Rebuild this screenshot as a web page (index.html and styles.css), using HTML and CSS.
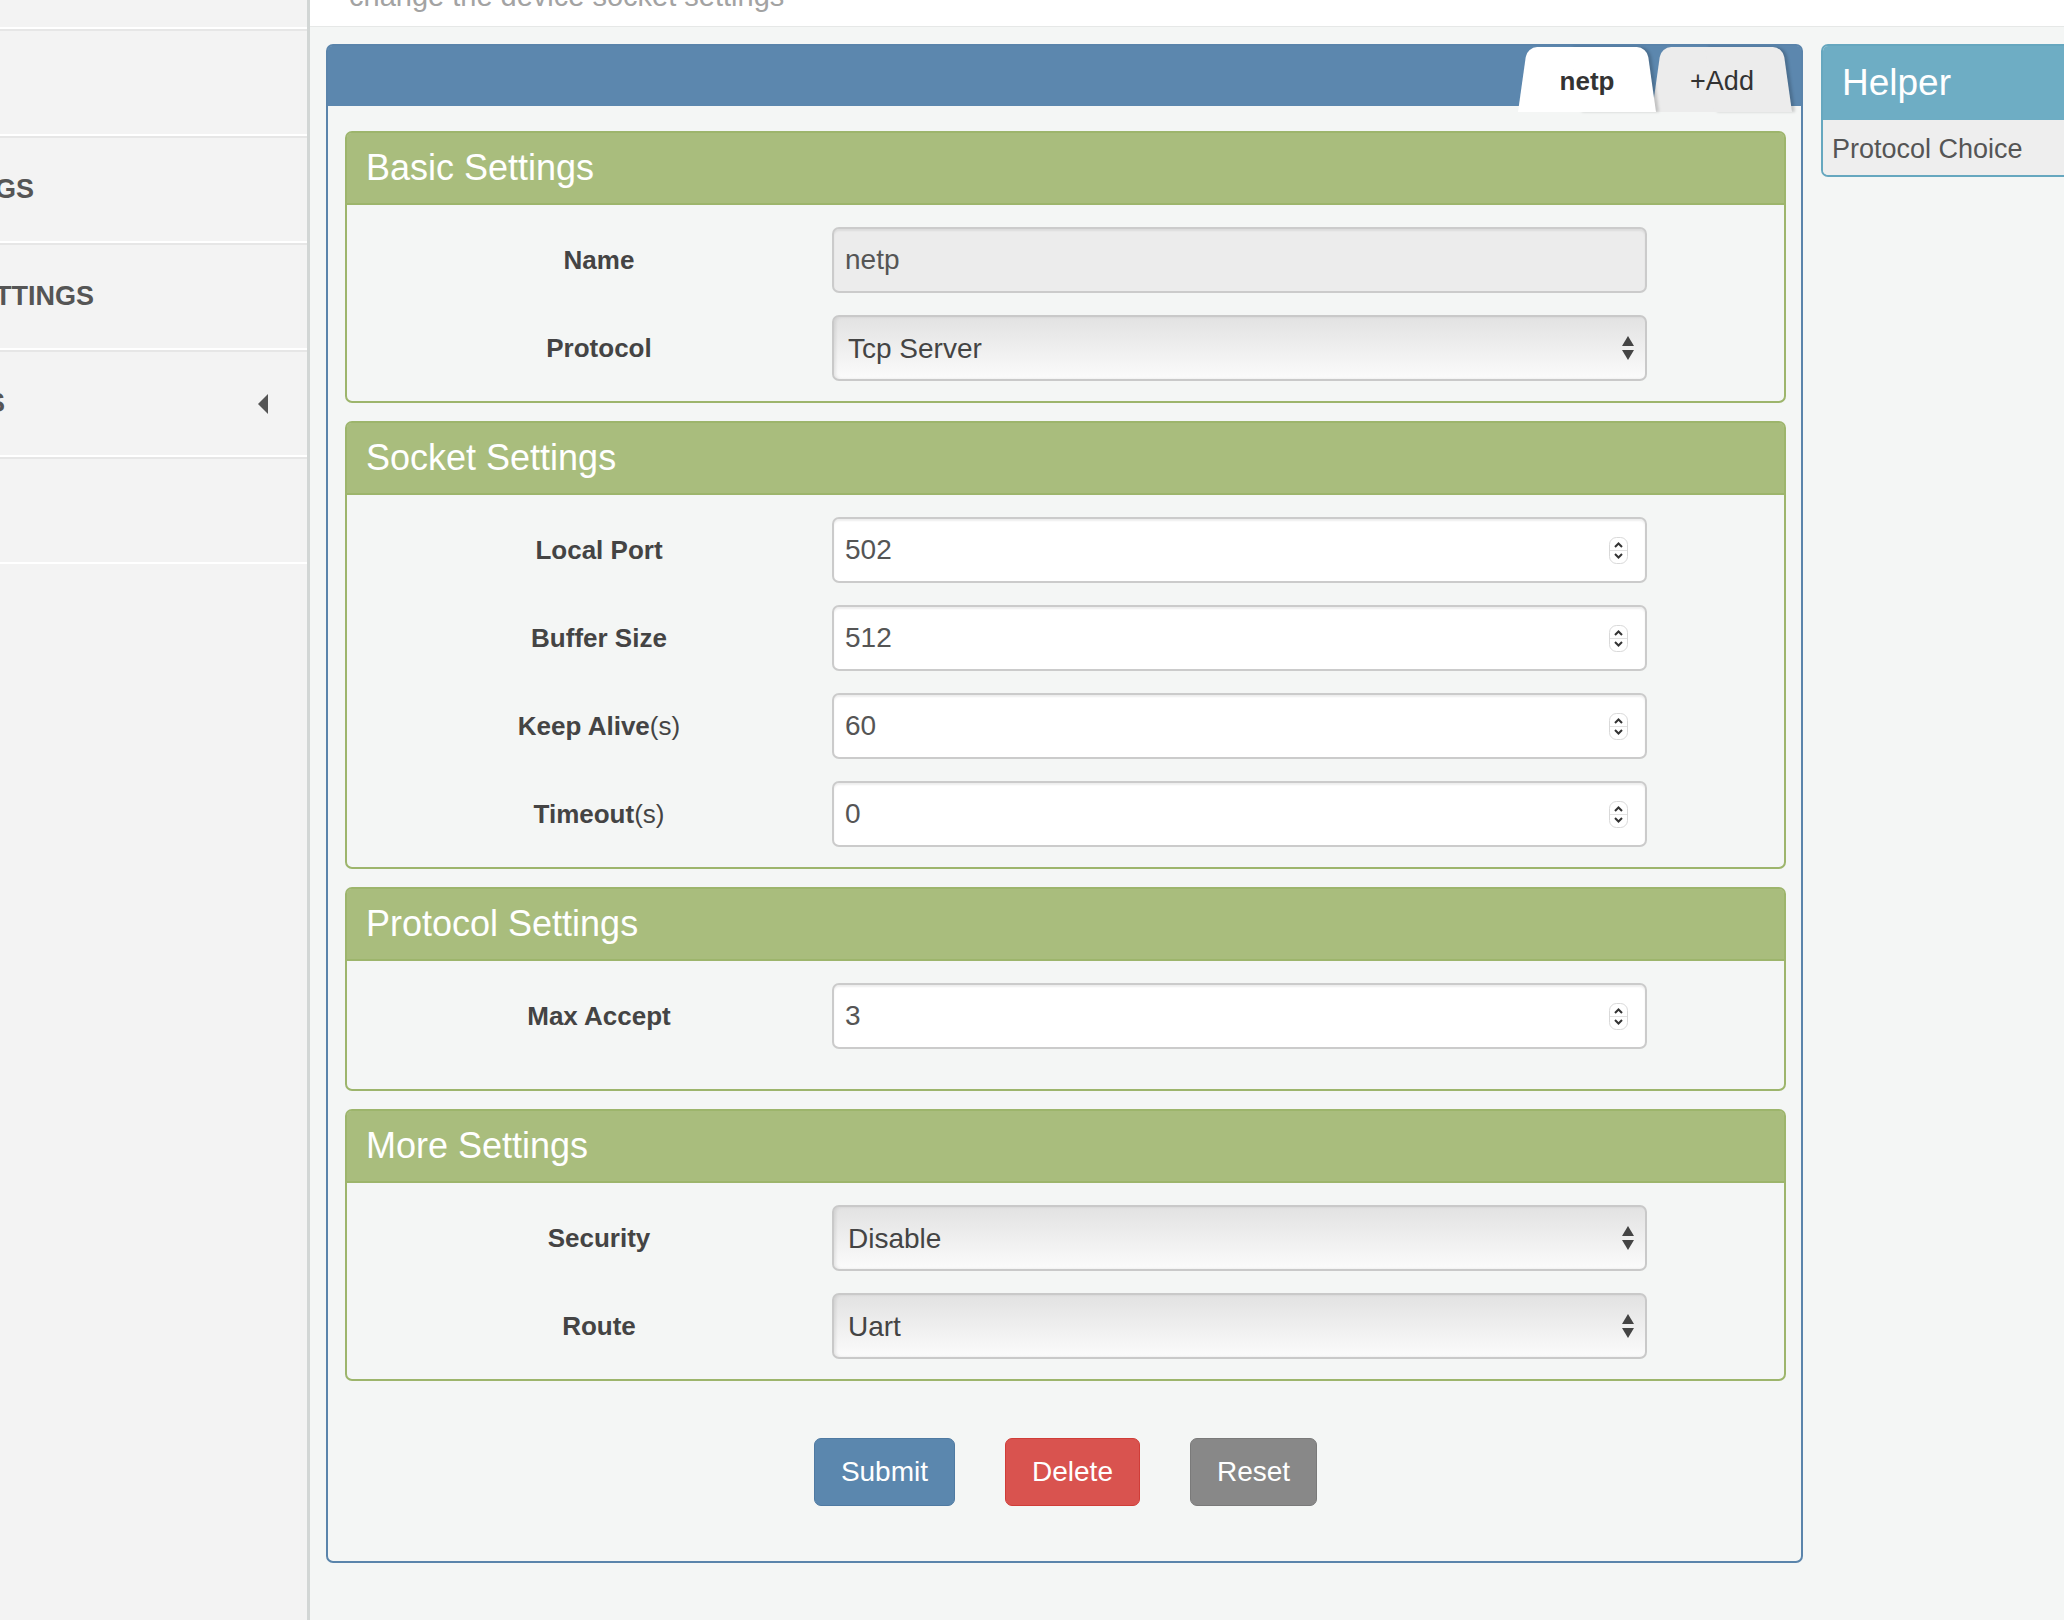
FILE: index.html
```html
<!DOCTYPE html>
<html lang="en">
  <head>
    <meta charset="UTF-8" />
    <meta name="viewport" content="width=device-width, initial-scale=1.0" />
    <title>Socket Settings</title>
    <link rel="stylesheet" href="styles.css">
  </head>
  <body>
    <div class="page">
      <aside class="sidebar">
        <ul class="menu">
          <li class="menu_item"></li>
          <li class="menu_item"></li>
          <li class="menu_item"><span class="menu_text">GS</span></li>
          <li class="menu_item"><span class="menu_text">TTINGS</span></li>
          <li class="menu_item"><span class="menu_text menu_text_s">S</span><i class="caret"></i></li>
          <li class="menu_item"></li>
        </ul>
      </aside>

      <div class="content">
        <div class="top_bar">
          <p class="subtitle">change the device socket settings</p>
        </div>

        <div class="main">
          <div class="panel">
            <div class="panel_head">
              <div class="tab tab_active">netp</div>
              <div class="tab tab_add">+Add</div>
            </div>

            <form class="panel_body">
              <!-- basic -->
              <div class="section">
                <div class="section_head">Basic Settings</div>
                <div class="section_body">
                  <label class="field_label">Name</label>
                  <div class="field field_readonly">
                    <input type="text" value="netp" readonly />
                  </div>
                  <label class="field_label">Protocol</label>
                  <div class="select_box">
                    <select>
                      <option>Tcp Server</option>
                      <option>Tcp Client</option>
                      <option>Udp Server</option>
                      <option>Udp Client</option>
                    </select>
                    <svg class="select_arrows" width="12" height="24" viewBox="0 0 12 24"><polygon points="0,10 6,0 12,10" fill="#444"/><polygon points="0,14 12,14 6,24" fill="#444"/></svg>
                  </div>
                </div>
              </div>

              <!-- socket -->
              <div class="section">
                <div class="section_head">Socket Settings</div>
                <div class="section_body">
                  <label class="field_label">Local Port</label>
                  <div class="field">
                    <input type="number" value="502" />
                    <svg class="spin" width="19" height="27" viewBox="0 0 19 27"><rect x="0.5" y="0.5" width="18" height="26" rx="7" fill="#fff" stroke="#d9d9d9"/><line x1="1" y1="13.5" x2="18" y2="13.5" stroke="#e2e2e2"/><path d="M6 10 L9.5 6.5 L13 10" fill="none" stroke="#333" stroke-width="2"/><path d="M6 17 L9.5 20.5 L13 17" fill="none" stroke="#333" stroke-width="2"/></svg>
                  </div>
                  <label class="field_label">Buffer Size</label>
                  <div class="field">
                    <input type="number" value="512" />
                    <svg class="spin" width="19" height="27" viewBox="0 0 19 27"><rect x="0.5" y="0.5" width="18" height="26" rx="7" fill="#fff" stroke="#d9d9d9"/><line x1="1" y1="13.5" x2="18" y2="13.5" stroke="#e2e2e2"/><path d="M6 10 L9.5 6.5 L13 10" fill="none" stroke="#333" stroke-width="2"/><path d="M6 17 L9.5 20.5 L13 17" fill="none" stroke="#333" stroke-width="2"/></svg>
                  </div>
                  <label class="field_label">Keep Alive<span class="unit">(s)</span></label>
                  <div class="field">
                    <input type="number" value="60" />
                    <svg class="spin" width="19" height="27" viewBox="0 0 19 27"><rect x="0.5" y="0.5" width="18" height="26" rx="7" fill="#fff" stroke="#d9d9d9"/><line x1="1" y1="13.5" x2="18" y2="13.5" stroke="#e2e2e2"/><path d="M6 10 L9.5 6.5 L13 10" fill="none" stroke="#333" stroke-width="2"/><path d="M6 17 L9.5 20.5 L13 17" fill="none" stroke="#333" stroke-width="2"/></svg>
                  </div>
                  <label class="field_label">Timeout<span class="unit">(s)</span></label>
                  <div class="field">
                    <input type="number" value="0" />
                    <svg class="spin" width="19" height="27" viewBox="0 0 19 27"><rect x="0.5" y="0.5" width="18" height="26" rx="7" fill="#fff" stroke="#d9d9d9"/><line x1="1" y1="13.5" x2="18" y2="13.5" stroke="#e2e2e2"/><path d="M6 10 L9.5 6.5 L13 10" fill="none" stroke="#333" stroke-width="2"/><path d="M6 17 L9.5 20.5 L13 17" fill="none" stroke="#333" stroke-width="2"/></svg>
                  </div>
                </div>
              </div>

              <!-- protocol -->
              <div class="section">
                <div class="section_head">Protocol Settings</div>
                <div class="section_body section_body_tall">
                  <label class="field_label">Max Accept</label>
                  <div class="field">
                    <input type="number" value="3" />
                    <svg class="spin" width="19" height="27" viewBox="0 0 19 27"><rect x="0.5" y="0.5" width="18" height="26" rx="7" fill="#fff" stroke="#d9d9d9"/><line x1="1" y1="13.5" x2="18" y2="13.5" stroke="#e2e2e2"/><path d="M6 10 L9.5 6.5 L13 10" fill="none" stroke="#333" stroke-width="2"/><path d="M6 17 L9.5 20.5 L13 17" fill="none" stroke="#333" stroke-width="2"/></svg>
                  </div>
                </div>
              </div>

              <!-- more -->
              <div class="section">
                <div class="section_head">More Settings</div>
                <div class="section_body">
                  <label class="field_label">Security</label>
                  <div class="select_box">
                    <select>
                      <option>Disable</option>
                      <option>Enable</option>
                    </select>
                    <svg class="select_arrows" width="12" height="24" viewBox="0 0 12 24"><polygon points="0,10 6,0 12,10" fill="#444"/><polygon points="0,14 12,14 6,24" fill="#444"/></svg>
                  </div>
                  <label class="field_label">Route</label>
                  <div class="select_box">
                    <select>
                      <option>Uart</option>
                      <option>None</option>
                    </select>
                    <svg class="select_arrows" width="12" height="24" viewBox="0 0 12 24"><polygon points="0,10 6,0 12,10" fill="#444"/><polygon points="0,14 12,14 6,24" fill="#444"/></svg>
                  </div>
                </div>
              </div>

              <div class="buttons">
                <button type="button" class="btn btn_submit">Submit</button>
                <button type="button" class="btn btn_delete">Delete</button>
                <button type="reset" class="btn btn_reset">Reset</button>
              </div>
            </form>
          </div>

          <div class="helper">
            <div class="helper_head">Helper</div>
            <div class="helper_body">Protocol Choice</div>
          </div>
        </div>
      </div>
    </div>
  </body>
</html>
```

FILE: styles.css
```css
html,
body {
  margin: 0;
  height: 100%;
  overflow: hidden;
}
body {
  font-family: "Liberation Sans", Arial, Helvetica, sans-serif;
  background-color: #f4f6f5;
  color: #444;
}
.page {
  display: flex;
  min-height: 100vh;
}

/* sidebar */
.sidebar {
  width: 307px;
  flex-shrink: 0;
  background-color: #f3f3f3;
  border-right: 3px solid #d2d6d5;
  overflow: hidden;
}
.menu {
  list-style: none;
  margin: -78px 0 0;
  padding: 0;
}
.menu_item {
  height: 103px;
  border-top: 2px solid #e6e6e6;
  border-bottom: 2px solid #fff;
  display: flex;
  align-items: center;
  justify-content: space-between;
  padding-right: 39px;
  font-size: 27px;
  font-weight: bold;
  color: #555;
}
.menu_text {
  margin-left: -5px;
}
.menu_text_s {
  margin-left: -13px;
}
.caret {
  width: 0;
  height: 0;
  border-top: 10px solid transparent;
  border-bottom: 10px solid transparent;
  border-right: 10px solid #555;
}

/* content */
.content {
  flex: 1;
  min-width: 0;
}
.top_bar {
  height: 26px;
  background-color: #fff;
  border-bottom: 1px solid #e6e8e7;
  overflow: hidden;
  padding-left: 39px;
}
.subtitle {
  margin: -19px 0 0;
  font-size: 29px;
  line-height: 30px;
  color: #a3a3a3;
}
.main {
  display: flex;
  align-items: flex-start;
  gap: 18px;
  padding: 17px 0 0 16px;
}

/* panel */
.panel {
  width: 1477px;
  flex-shrink: 0;
  box-sizing: border-box;
  border: 2px solid #5a84ab;
  border-radius: 7px;
  background-color: #f4f6f5;
}
.panel_head {
  height: 60px;
  background-color: #5c87ae;
  border-radius: 4px 4px 0 0;
  display: flex;
  justify-content: flex-end;
  align-items: flex-start;
  padding: 1px 9px 0 0;
  box-sizing: border-box;
}
.tab {
  position: relative;
  z-index: 1;
  height: 65px;
  flex-shrink: 0;
  display: flex;
  align-items: center;
  justify-content: center;
  padding-top: 4px;
  box-sizing: border-box;
  font-size: 26px;
  color: #333;
}
.tab::before,
.tab::after {
  content: "";
  position: absolute;
  top: 0;
  bottom: 0;
  width: 56%;
  z-index: -1;
}
.tab::before {
  left: 0;
  transform: skewX(-8deg);
  transform-origin: bottom left;
  border-radius: 10px 0 0 0;
}
.tab::after {
  right: 0;
  transform: skewX(8deg);
  transform-origin: bottom right;
  border-radius: 0 10px 0 0;
  box-shadow: 3px 0 3px rgba(0, 0, 0, 0.18);
}
.tab_active {
  width: 138px;
  z-index: 2;
  font-weight: bold;
}
.tab_active::before,
.tab_active::after {
  background-color: #fff;
}
.tab_add {
  width: 140px;
  margin-left: -4px;
  font-size: 27px;
}
.tab_add::before,
.tab_add::after {
  background-color: #ececec;
}
.panel_body {
  margin: 0;
  padding: 25px 15px 55px 17px;
}

/* sections */
.section {
  border: 2px solid #9db56c;
  border-radius: 7px;
  margin-bottom: 18px;
  background-color: #f4f6f5;
}
.section_head {
  height: 72px;
  box-sizing: border-box;
  background-color: #a9bd7d;
  border-bottom: 2px solid #9db56c;
  border-radius: 4px 4px 0 0;
  padding-left: 19px;
  font-size: 36px;
  line-height: 70px;
  color: #fff;
}
.section_body {
  display: grid;
  grid-template-columns: 466px 815px;
  row-gap: 22px;
  align-items: center;
  padding: 22px 0 20px 19px;
}
.section_body_tall {
  padding-bottom: 40px;
}
.field_label {
  text-align: center;
  font-size: 26px;
  font-weight: bold;
  color: #444;
}
.unit {
  font-weight: normal;
}
.field {
  height: 66px;
  box-sizing: border-box;
  display: flex;
  align-items: center;
  padding: 0 17px 0 11px;
  background-color: #fff;
  border: 2px solid #cbcbcb;
  border-radius: 7px;
  box-shadow: inset 0 2px 2px rgba(0, 0, 0, 0.07);
}
.field input {
  flex: 1;
  min-width: 0;
  border: none;
  outline: none;
  background: transparent;
  font-family: inherit;
  font-size: 28px;
  color: #555;
  padding: 0;
  -moz-appearance: textfield;
}
.field input::-webkit-inner-spin-button,
.field input::-webkit-outer-spin-button {
  -webkit-appearance: none;
  margin: 0;
}
.field_readonly {
  background-color: #ececec;
}
.spin {
  flex-shrink: 0;
}
.select_box {
  height: 66px;
  box-sizing: border-box;
  display: flex;
  align-items: center;
  padding: 0 11px 0 14px;
  border: 2px solid #c9c9c9;
  border-radius: 7px;
  background: linear-gradient(#e2e2e2, #fbfbfb);
  box-shadow: inset 2px 0 3px rgba(0, 0, 0, 0.08);
}
.select_box select {
  flex: 1;
  min-width: 0;
  -webkit-appearance: none;
  appearance: none;
  border: none;
  outline: none;
  background: transparent;
  font-family: inherit;
  font-size: 28px;
  color: #444;
  padding: 0;
}
.select_arrows {
  flex-shrink: 0;
}

/* buttons */
.buttons {
  display: flex;
  justify-content: center;
  gap: 50px;
  margin-top: 57px;
}
.btn {
  height: 68px;
  padding: 0 26px;
  border-radius: 7px;
  font-family: inherit;
  font-size: 28px;
  color: #fff;
  cursor: pointer;
}
.btn_submit {
  background-color: #5b87ae;
  border: 1px solid #4f7aa2;
}
.btn_delete {
  background-color: #d9534f;
  border: 1px solid #d03d38;
}
.btn_reset {
  background-color: #888;
  border: 1px solid #7a7a7a;
}

/* helper */
.helper {
  width: 320px;
  flex-shrink: 0;
  border: 2px solid #66a7bf;
  border-radius: 7px;
  overflow: hidden;
}
.helper_head {
  height: 74px;
  background-color: #6eadc4;
  padding-left: 19px;
  font-size: 37px;
  line-height: 74px;
  color: #fff;
}
.helper_body {
  height: 55px;
  background-color: #eeeeee;
  padding-left: 9px;
  font-size: 27px;
  line-height: 59px;
  color: #555;
}
```
